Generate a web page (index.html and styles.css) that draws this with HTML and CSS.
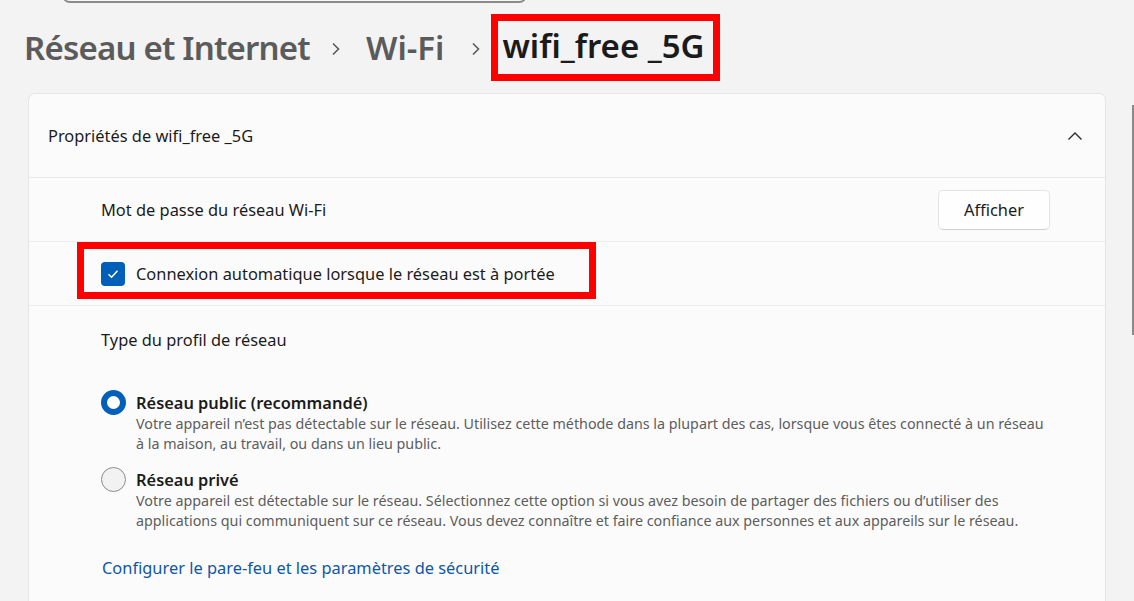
FILE: index.html
```html
<!DOCTYPE html>
<html lang="fr">
<head>
<meta charset="utf-8">
<link rel="stylesheet" href="styles.css">
</head>
<body>
<div class="search"></div>
<div class="crumbs">
  <span class="crumb first">Réseau et Internet</span>
  <svg class="sep" width="10" height="14" viewBox="0 0 10 14"><path d="M2 1.5 L7.5 7 L2 12.5" fill="none" stroke="#5a5a5a" stroke-width="1.6"/></svg>
  <span class="crumb">Wi-Fi</span>
  <svg class="sep sep2" width="10" height="14" viewBox="0 0 10 14"><path d="M2 1.5 L7.5 7 L2 12.5" fill="none" stroke="#5a5a5a" stroke-width="1.6"/></svg>
  <span class="crumb current">wifi_free _5G</span>
</div>
<section class="card">
  <div class="card-head">
    <span>Propriétés de wifi_free _5G</span>
    <svg class="chev" width="16" height="10" viewBox="0 0 16 10"><path d="M1.5 8.5 L8 2 L14.5 8.5" fill="none" stroke="#2b2b2b" stroke-width="1.4"/></svg>
  </div>
  <div class="row">
    <span>Mot de passe du réseau Wi-Fi</span>
    <button class="btn">Afficher</button>
  </div>
  <div class="row row-check">
    <span class="checkbox"><svg width="14" height="14" viewBox="0 0 14 14"><path d="M2.5 7.2 L5.6 10.2 L11.5 3.8" fill="none" stroke="#fff" stroke-width="1.5"/></svg></span>
    <span>Connexion automatique lorsque le réseau est à portée</span>
    <div class="mark"></div>
  </div>
  <div class="profile">
    <div class="profile-title">Type du profil de réseau</div>
    <div class="option">
      <span class="radio on"></span>
      <div class="opt-text">
        <div class="opt-name">Réseau public (recommandé)</div>
        <div class="opt-desc">Votre appareil n’est pas détectable sur le réseau. Utilisez cette méthode dans la plupart des cas, lorsque vous êtes connecté à un réseau à la maison, au travail, ou dans un lieu public.</div>
      </div>
    </div>
    <div class="option">
      <span class="radio"></span>
      <div class="opt-text">
        <div class="opt-name">Réseau privé</div>
        <div class="opt-desc">Votre appareil est détectable sur le réseau. Sélectionnez cette option si vous avez besoin de partager des fichiers ou d’utiliser des applications qui communiquent sur ce réseau. Vous devez connaître et faire confiance aux personnes et aux appareils sur le réseau.</div>
      </div>
    </div>
    <a class="link">Configurer le pare-feu et les paramètres de sécurité</a>
  </div>
</section>
<div class="scroll"></div>
</body>
</html>
```
FILE: styles.css
```css
html, body {
  margin: 0;
  height: 100%;
  overflow: hidden;
}
body {
  background: #f3f3f3;
  font-family: "Noto Sans", "Open Sans", sans-serif;
  color: #1b1b1b;
  position: relative;
}
.search {
  margin: -30px 0 0 62px;
  width: 465px;
  height: 33px;
  box-sizing: border-box;
  border: 1px solid #e2e2e2;
  border-bottom: 2px solid #8a8a8a;
  border-radius: 0 0 8px 8px;
  background: #f6f6f6;
}
.crumbs {
  display: flex;
  align-items: center;
  margin: 11px 0 0 24px;
  height: 67px;
  font-size: 33px;
  font-weight: 600;
  color: #5b5b5b;
}
.crumb.first {
  letter-spacing: -0.8px;
}
.sep {
  margin: 2px 25px 0 21px;
}
.sep.sep2 {
  margin: 2px 22px 0 27px;
}
.crumb.current {
  color: #1b1b1b;
  border: 7px solid #ff0000;
  padding: 0 8px 0 4px;
  height: 53px;
  line-height: 50px;
  margin-left: -12px;
}
.card {
  margin: 12px 0 0 28px;
  width: 1078px;
  height: 520px;
  box-sizing: border-box;
  background: #fbfbfb;
  border: 1px solid #e5e5e5;
  border-radius: 7px;
  font-size: 16.4px;
}
.card-head {
  display: flex;
  align-items: center;
  justify-content: space-between;
  height: 83px;
  padding: 0 22px 0 19px;
  border-bottom: 1px solid #e8e8e8;
}
.row {
  display: flex;
  align-items: center;
  justify-content: space-between;
  height: 63px;
  padding: 0 55px 0 72px;
  border-bottom: 1px solid #ededed;
  position: relative;
}
.row-check {
  justify-content: flex-start;
  gap: 11px;
}
.btn {
  width: 112px;
  height: 40px;
  background: #fefefe;
  border: 1px solid #e3e3e3;
  border-bottom-color: #d0d0d0;
  border-radius: 5px;
  font: inherit;
  color: #1b1b1b;
}
.checkbox {
  width: 24px;
  height: 24px;
  border-radius: 4px;
  background: #005fb8;
  display: flex;
  align-items: center;
  justify-content: center;
}
.mark {
  position: absolute;
  left: 48px;
  top: 0;
  width: 519px;
  height: 57px;
  box-sizing: border-box;
  border: 7px solid #ff0000;
}
.profile {
  padding: 22px 58px 0 72px;
}
.profile-title {
  height: 24px;
  line-height: 24px;
}
.option {
  display: flex;
  gap: 10px;
  margin-top: 40px;
}
.option + .option {
  margin-top: 15px;
}
.radio {
  flex: none;
  width: 25px;
  height: 25px;
  box-sizing: border-box;
  border-radius: 50%;
  border: 1px solid #8b8b8b;
  background: #f2f2f2;
  margin-top: -2px;
}
.radio.on {
  border: 6.5px solid #005fb8;
  background: #fff;
}
.opt-name {
  font-weight: 600;
  line-height: 22px;
}
.opt-desc {
  font-size: 14.3px;
  line-height: 20px;
  color: #5d5d5d;
}
.link {
  display: block;
  margin-top: 25px;
  color: #0e56a8;
  line-height: 24px;
  margin-left: 1px;
}
.scroll {
  position: absolute;
  right: 0;
  top: 105px;
  width: 2px;
  height: 230px;
  background: #8a8a8a;
}
```
